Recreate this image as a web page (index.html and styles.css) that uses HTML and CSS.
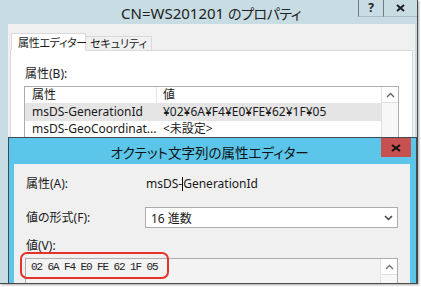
FILE: index.html
```html
<!DOCTYPE html>
<html lang="ja">
<head>
    <meta charset="UTF-8">
    <title>CN=WS201201 のプロパティ</title>
    <link rel="stylesheet" href="styles.css">
</head>
<body>
    <div class="shot">
        <div class="window">
            <div class="titlebar">
                <span class="title">CN=WS201201 <span class="jp">のプロパティ</span></span>
                <div class="caption-btns">
                    <span class="cap-btn help">?</span>
                    <span class="cap-btn close">
                        <svg width="9" height="8" viewBox="0 0 9 8"><path d="M1 1 L8 7 M8 1 L1 7" stroke="#1e1e1e" stroke-width="2"/></svg>
                    </span>
                </div>
            </div>
            <div class="client">
                <div class="tabs">
                    <span class="tab active">属性エディター</span>
                    <span class="tab">セキュリティ</span>
                </div>
                <div class="tab-panel">
                    <div class="label">属性(B):</div>
                    <div class="listbox">
                        <div class="list-body">
                            <div class="row head"><span class="c1">属性</span><span class="c2">値</span></div>
                            <div class="row sel"><span class="c1">msDS-GenerationId</span><span class="c2">¥02¥6A¥F4¥E0¥FE¥62¥1F¥05</span></div>
                            <div class="row"><span class="c1">msDS-GeoCoordinat...</span><span class="c2">&lt;未設定&gt;</span></div>
                        </div>
                        <div class="vscroll">
                            <span class="arrow-btn">
                                <svg width="9" height="6" viewBox="0 0 9 6"><path d="M1 5 L4.5 1.5 L8 5" fill="none" stroke="#606060" stroke-width="1.3"/></svg>
                            </span>
                        </div>
                    </div>
                </div>
            </div>
        </div>

        <div class="dialog">
            <div class="dialog-title">
                <span class="dtitle">オクテット文字列の属性エディター</span>
                <span class="dclose">
                    <svg width="10" height="8" viewBox="0 0 10 8"><path d="M1 1 L9 7 M9 1 L1 7" stroke="#111" stroke-width="2"/></svg>
                </span>
            </div>
            <div class="dialog-client">
                <div class="field">
                    <span class="label">属性(A):</span>
                    <span class="value">msDS-<span class="caret"></span>GenerationId</span>
                </div>
                <div class="field">
                    <span class="label">値の形式(F):</span>
                    <div class="select">
                        <span>16 進数</span>
                        <svg width="9" height="6" viewBox="0 0 9 6"><path d="M1 1 L4.5 4.5 L8 1" fill="none" stroke="#404040" stroke-width="1.5"/></svg>
                    </div>
                </div>
                <div class="label value-label">値(V):</div>
                <div class="textarea">
                    <div class="hex">02 6A F4 E0 FE 62 1F 05</div>
                    <div class="vscroll">
                        <span class="arrow-btn">
                            <svg width="9" height="6" viewBox="0 0 9 6"><path d="M1 5 L4.5 1.5 L8 5" fill="none" stroke="#707070" stroke-width="1.3"/></svg>
                        </span>
                    </div>
                </div>
            </div>
        </div>

        <div class="callout"></div>
    </div>
</body>
</html>
```

FILE: styles.css
```css
* {
    margin: 0;
    padding: 0;
    box-sizing: border-box;
}

body {
    background: #fff;
    font-family: "Noto Sans", "Noto Sans CJK JP", sans-serif;
    font-size: 12px;
    color: #1a1a1a;
    font-feature-settings: "palt";
    width: 421px;
    height: 287px;
    overflow: hidden;
}

.shot {
    position: relative;
    width: 418px;
    height: 284px;
    border-right: 1px solid #4a4a4a;
    border-bottom: 1px solid #4a4a4a;
    box-shadow: 1px 1px 2px rgba(0, 0, 0, 0.35);
    overflow: hidden;
}

/* outer property window */
.window {
    height: 100%;
    background: #c8dce4;
    display: flex;
    flex-direction: column;
}

.titlebar {
    height: 24px;
    display: flex;
    align-items: flex-start;
}

.title {
    flex: 1;
    text-align: center;
    padding-left: 64px;
    font-size: 15px;
    line-height: 26px;
    color: #222;
    white-space: nowrap;
}

.title .jp {
    font-size: 14px;
    letter-spacing: -0.5px;
}

.caption-btns {
    display: flex;
}

.cap-btn {
    height: 17px;
    display: flex;
    justify-content: center;
    align-items: center;
    font-weight: bold;
    font-size: 12px;
    line-height: 1;
    border-left: 1px solid #6b7c84;
    border-bottom: 1px solid #a9bcc4;
    color: #222;
}

.cap-btn.help {
    width: 25px;
}

.cap-btn.close {
    width: 34px;
}

.client {
    flex: 1;
    margin: 0 2px 0 8px;
    background: #f0f0f0;
    padding: 9px 2px 0 2px;
    display: flex;
    flex-direction: column;
}

.tabs {
    display: flex;
    align-items: flex-end;
    padding-left: 1px;
    height: 18px;
    margin-bottom: -1px;
    position: relative;
    z-index: 1;
}

.tab {
    height: 15px;
    padding: 0 4px;
    font-size: 11px;
    line-height: 13px;
    white-space: nowrap;
    background: #f0f0f0;
    border: 1px solid #d9d9d9;
    border-left: none;
    border-bottom: 1px solid #d9d9d9;
}

.tab.active {
    height: 18px;
    width: 75px;
    padding: 2px 0 0 6px;
    letter-spacing: -0.3px;
    background: #fff;
    border-left: 1px solid #d9d9d9;
    border-bottom-color: #fff;
}

.tab-panel {
    flex: 1;
    background: #fff;
    border: 1px solid #d9d9d9;
    padding: 15px 13px 0 13px;
}

.label {
    line-height: 16px;
    padding-left: 1px;
    margin-bottom: 4px;
    white-space: nowrap;
}

.listbox {
    display: flex;
    border: 1px solid #adadad;
    height: 80px;
}

.list-body {
    flex: 1;
}

.row {
    display: flex;
    height: 17px;
    line-height: 16px;
    white-space: nowrap;
}

.row .c1 {
    width: 132px;
    padding-left: 7px;
    overflow: hidden;
}

.row .c2 {
    padding-left: 6px;
}

.row.head {
    border-bottom: 1px solid #e5e5e5;
}

.row.head .c1 {
    border-right: 1px solid #e5e5e5;
}

.row.sel {
    background: #e5e5e5;
}

.vscroll {
    width: 17px;
    border-left: 1px solid #e0e0e0;
    background: #f7f7f7;
}

.arrow-btn {
    display: flex;
    justify-content: center;
    align-items: center;
    height: 16px;
    border-bottom: 1px solid #e0e0e0;
    background: #fff;
}

/* octet string editor dialog */
.dialog {
    position: absolute;
    left: 8px;
    top: 137px;
    right: 0;
    bottom: 0;
    background: #5bc5ea;
    border: 1px solid #3d4a50;
    border-bottom: none;
    padding: 0 6px 0 5px;
    display: flex;
    flex-direction: column;
}

.dialog-title {
    height: 26px;
    display: flex;
    align-items: flex-start;
}

.dtitle {
    flex: 1;
    text-align: center;
    padding-left: 24px;
    font-size: 13.5px;
    line-height: 30px;
    color: #111;
    white-space: nowrap;
}

.dclose {
    width: 30px;
    height: 19px;
    margin-right: -1px;
    background: #c75050;
    display: flex;
    justify-content: center;
    align-items: center;
}

.dialog-client {
    flex: 1;
    background: #f0f0f0;
    padding: 11px 12px 0 11px;
}

.field {
    display: grid;
    grid-template-columns: 120px 1fr;
    align-items: center;
    margin-bottom: 15px;
}

.field .label {
    margin-bottom: 0;
}

.value {
    padding-left: 1px;
    line-height: 17px;
}

.caret {
    display: inline-block;
    width: 1px;
    height: 14px;
    background: #000;
    vertical-align: -3px;
}

.select {
    height: 21px;
    display: flex;
    justify-content: space-between;
    align-items: center;
    background: #fff;
    border: 1px solid #acacac;
    padding: 0 4px 0 5px;
}

.value-label {
    margin-top: -5px;
    margin-bottom: 4px;
}

.textarea {
    display: flex;
    height: 40px;
    border: 1px solid #abadb3;
    background: #f3f3f3;
}

.hex {
    flex: 1;
    padding: 1px 0 0 5px;
    font-family: "Liberation Mono", monospace;
    font-size: 11px;
    letter-spacing: -1.1px;
    line-height: 14px;
    color: #222;
}

.callout {
    position: absolute;
    left: 20px;
    top: 252px;
    width: 149px;
    height: 27px;
    border: 2px solid #e5332a;
    border-radius: 7px;
}
```
